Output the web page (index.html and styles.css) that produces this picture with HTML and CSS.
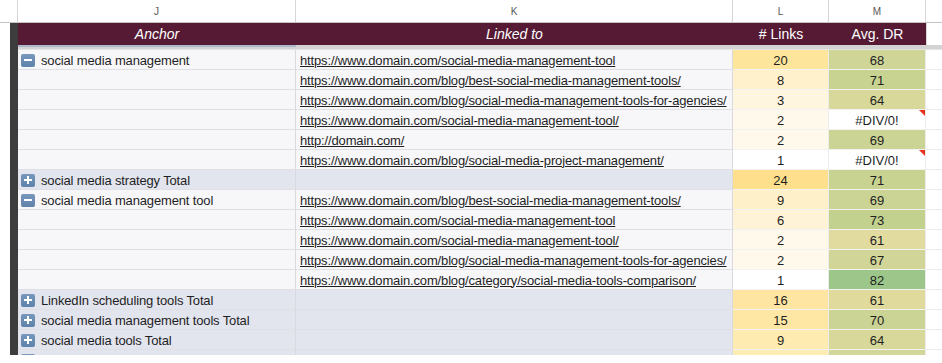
FILE: index.html
```html
<!DOCTYPE html>
<html lang="en">
<head>
    <meta charset="UTF-8">
    <title>Anchor report</title>
    <link rel="stylesheet" href="styles.css">
</head>
<body>
    <div class="col-heads">
        <div class="col-head corner"></div>
        <div class="col-head">J</div>
        <div class="col-head">K</div>
        <div class="col-head">L</div>
        <div class="col-head">M</div>
        <div class="col-head rest"></div>
    </div>

    <div class="sheet">
        <div class="gutter"><div class="gutter-bar"></div></div>
        <div class="grid">
            <div class="head-row">
                <div class="hcell italic">Anchor</div>
                <div class="hcell italic">Linked to</div>
                <div class="hcell">#&nbsp;Links</div>
                <div class="hcell">Avg. DR</div>
                <div class="hcell blank"></div>
            </div>
            <div class="head-band"><div class="band-j"></div></div>
            <div id="rows"></div>
        </div>
    </div>

    <script>
        const data = [
            ['minus', 'social media management', 'https://www.domain.com/social-media-management-tool', 20, '#fee59c', '68', '#cfd597'],
            ['', '', 'https://www.domain.com/blog/best-social-media-management-tools/', 8, '#fef1cc', '71', '#c8d392'],
            ['', '', 'https://www.domain.com/blog/social-media-management-tools-for-agencies/', 3, '#fff6e0', '64', '#d8d89b'],
            ['', '', 'https://www.domain.com/social-media-management-tool/', 2, '#fff9ec', '#DIV/0!', ''],
            ['', '', 'http://domain.com/', 2, '#fff9ec', '69', '#ccd495'],
            ['', '', 'https://www.domain.com/blog/social-media-project-management/', 1, '#ffffff', '#DIV/0!', ''],
            ['plus', 'social media strategy Total', '', 24, '#fedf8c', '71', '#c8d392'],
            ['minus', 'social media management tool', 'https://www.domain.com/blog/best-social-media-management-tools/', 9, '#fef0c8', '69', '#ccd495'],
            ['', '', 'https://www.domain.com/social-media-management-tool', 6, '#fef3d6', '73', '#c3d18f'],
            ['', '', 'https://www.domain.com/social-media-management-tool/', 2, '#fff9ec', '61', '#e1db9f'],
            ['', '', 'https://www.domain.com/blog/social-media-management-tools-for-agencies/', 2, '#fff9ec', '67', '#d1d698'],
            ['', '', 'https://www.domain.com/blog/category/social-media-tools-comparison/', 1, '#ffffff', '82', '#9dc78a'],
            ['plus', 'LinkedIn scheduling tools Total', '', 16, '#fee6a2', '61', '#e0da9d'],
            ['plus', 'social media management tools Total', '', 15, '#fee7a4', '70', '#cbd494'],
            ['plus', 'social media tools Total', '', 9, '#fdebb0', '64', '#d8d89a'],
            ['plus', '', '', '', '#fdecb4', '', '#d3d699']
        ];

        const rows = document.getElementById('rows');

        data.forEach(r => {
            const [icon, anchor, url, links, linkBg, dr, drBg] = r;
            const isTotal = icon === 'plus';
            const err = dr === '#DIV/0!';
            rows.innerHTML += `
                <div class="row ${isTotal ? 'total' : ''}">
                    <div class="cell anchor">
                        ${icon ? `<span class="toggle ${icon}"></span>` : ''}
                        <span>${anchor}</span>
                    </div>
                    <div class="cell link">${url ? `<a href="#">${url}</a>` : ''}</div>
                    <div class="cell num" style="background:${linkBg}">${links}</div>
                    <div class="cell num ${err ? 'err' : ''}" style="background:${drBg || '#ffffff'}">${dr}</div>
                    <div class="cell blank"></div>
                </div>
            `;
        });
    </script>
</body>
</html>
```

FILE: styles.css
```css
* {
    margin: 0;
    padding: 0;
    box-sizing: border-box;
}

body {
    width: 942px;
    height: 363px;
    overflow: hidden;
    background: #ffffff;
    font-family: 'Liberation Sans', Arial, sans-serif;
    font-size: 13px;
    color: #1f1f1f;
}

.col-heads {
    display: grid;
    grid-template-columns: 18px 278px 437px 96px 97px 1fr;
    height: 23px;
    border-bottom: 1px solid #c4c4c4;
}

.col-head {
    display: flex;
    align-items: center;
    justify-content: center;
    font-size: 10px;
    color: #575757;
    border-right: 1px solid #d6d6d6;
}

.col-head.rest {
    border-right: none;
}

.sheet {
    display: flex;
    height: 332px;
    overflow: hidden;
}

.gutter {
    width: 18px;
    flex-shrink: 0;
    padding-left: 10px;
}

.gutter-bar {
    height: 100%;
    background: #3d3d3d;
}

.grid {
    flex: 1;
}

.head-row,
.row {
    display: grid;
    grid-template-columns: 278px 437px 96px 97px 1fr;
}

.head-row {
    height: 22px;
}

.hcell {
    background: #561a34;
    color: #ffffff;
    font-size: 14px;
    display: flex;
    align-items: center;
    justify-content: center;
}

.hcell.italic {
    font-style: italic;
}

.hcell.blank {
    background: #ffffff;
    border-left: 1px solid #d6d6d6;
}

.head-band {
    height: 5px;
    background: #d3d3d3;
    border-bottom: 1px solid #e4e4e4;
}

.band-j {
    width: 278px;
    height: 2px;
    background: #aab8ca;
}

.row {
    height: 20px;
    background: #f7f7fa;
}

.row.total {
    background: #e2e4ee;
}

.cell {
    display: flex;
    align-items: center;
    padding-top: 1px;
    border-bottom: 1px solid #e0e0e4;
    border-right: 1px solid #dadade;
    white-space: nowrap;
    overflow: hidden;
    position: relative;
}

.cell.anchor {
    padding-left: 3px;
    gap: 6px;
    letter-spacing: -0.15px;
}

.cell.link {
    padding-left: 4px;
    letter-spacing: -0.15px;
}

.cell.link a {
    color: #1f1f1f;
    text-decoration: underline;
}

.cell.num {
    justify-content: center;
    border-bottom-color: #f2f2f2;
    border-right-color: #ececec;
}

.cell.blank {
    background: #ffffff;
    border-right: none;
    border-bottom-color: #ececec;
}

.cell.err::after {
    content: '';
    position: absolute;
    top: 0;
    right: 0;
    border-top: 6px solid #e8301c;
    border-left: 6px solid transparent;
}

.toggle {
    width: 14px;
    height: 13px;
    border-radius: 2px;
    background: linear-gradient(#7797bb, #5f82ab);
    position: relative;
    flex-shrink: 0;
}

.toggle::before,
.toggle.plus::after {
    content: '';
    position: absolute;
    left: 3px;
    top: 5px;
    width: 8px;
    height: 2px;
    background: #ffffff;
}

.toggle.plus::after {
    left: 6px;
    top: 2px;
    width: 2px;
    height: 8px;
}
```
